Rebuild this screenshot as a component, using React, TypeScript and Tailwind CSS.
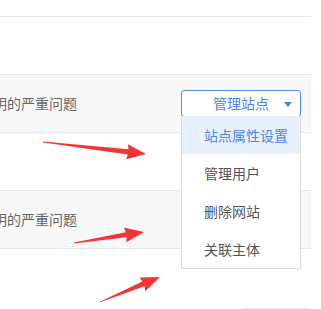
import React from 'react';

const font = { fontFamily: '"Noto Sans CJK SC", "Noto Sans", sans-serif' };

type Pt = [number, number];

// screenshot-style annotation arrow: sharp tail, widening shaft, triangular head
const arrowPoints = (from: Pt, to: Pt) => {
  const [x1, y1] = from;
  const [x2, y2] = to;
  const len = Math.hypot(x2 - x1, y2 - y1);
  const ux = (x2 - x1) / len;
  const uy = (y2 - y1) / len;
  const nx = -uy;
  const ny = ux;
  const head = 18;
  const bx = x2 - ux * head;
  const by = y2 - uy * head;
  const wx = x2 - ux * (head + 1);
  const wy = y2 - uy * (head + 1);
  const pts: Pt[] = [
    [x1 + nx * 0.4, y1 + ny * 0.4],
    [bx + nx * 2.6, by + ny * 2.6],
    [wx + nx * 7.5, wy + ny * 7.5],
    [x2, y2],
    [wx - nx * 7.5, wy - ny * 7.5],
    [bx - nx * 2.6, by - ny * 2.6],
    [x1 - nx * 0.4, y1 - ny * 0.4],
  ];
  return pts.map(p => p.join(',')).join(' ');
};

const arrows: [Pt, Pt][] = [
  [[43, 142], [146, 154]],
  [[74, 243], [144, 232]],
  [[100, 302], [160, 277]],
];

const menuItems = ['站点属性设置', '管理用户', '删除网站', '关联主体'];

const Row: React.FC<{ gray?: boolean; children?: React.ReactNode }> = ({ gray, children }) => (
  <div
    className={
      'h-[58px] border-b border-[#e6e6e6] flex items-center justify-between pr-[10px] ' +
      (gray ? 'bg-[#f8f8f8]' : 'bg-white')
    }
  >
    {children}
  </div>
);

const ManageButton: React.FC<{ open?: boolean }> = ({ open }) => (
  <div className="relative">
    <button className="relative w-[120px] h-[27px] border border-[#4c8bf5] rounded-[3px] bg-white text-[14px] text-[#4a85f0] flex items-center justify-center">
      管理站点
      <span className="absolute right-[8px] top-[11px] w-0 h-0 border-l-[4px] border-r-[4px] border-t-[5px] border-l-transparent border-r-transparent border-t-[#4a7fe8]" />
    </button>
    {open && (
      <div className="absolute left-0 top-[26px] w-[120px] bg-white border border-[#dcdcdc] border-t-0 z-10">
        {menuItems.map((item, i) => (
          <div
            key={item}
            className={
              'h-[38px] flex items-center pl-[22px] text-[14px] ' +
              (i === 0 ? 'bg-[#e8f0fe] text-[#4a85f0]' : 'text-[#555]')
            }
          >
            {item}
          </div>
        ))}
      </div>
    )}
  </div>
);

const Desc = () => (
  <span className="-ml-[7px] whitespace-nowrap text-[14px] text-[#666]">明的严重问题</span>
);

export default function App() {
  return (
    <div className="relative w-[321px] h-[309px] overflow-hidden bg-white" style={font}>
      <div className="w-[311px]">
        <div className="h-[17px] border-b border-[#e6e6e6]" />
        <div className="h-[58px] border-b border-[#e6e6e6]" />
        <Row gray>
          <Desc />
          <ManageButton open />
        </Row>
        <Row />
        <Row gray>
          <Desc />
        </Row>
        <div className="h-[59px]" />
        <div className="ml-[241px] w-[70px] h-[20px] border border-[#e6e6e6] rounded-[4px]" />
      </div>
      <svg className="absolute inset-0 pointer-events-none z-20" width={321} height={309}>
        {arrows.map(([a, b], i) => (
          <polygon key={i} points={arrowPoints(a, b)} fill="#f43535" />
        ))}
      </svg>
    </div>
  );
}
